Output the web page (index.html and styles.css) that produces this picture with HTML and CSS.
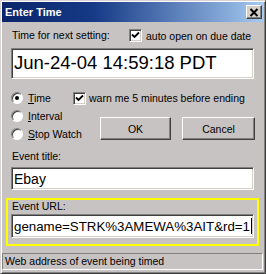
FILE: index.html
```html
<!DOCTYPE html>
<html lang="en">
<head>
    <meta charset="UTF-8">
    <title>Enter Time</title>
    <link rel="stylesheet" href="styles.css">
</head>
<body>
    <div class="window">
        <div class="titlebar">
            <span class="title">Enter Time</span>
            <span class="close">
                <svg width="10" height="9" viewBox="0 0 10 9"><path d="M1.5 1 L8.5 8 M8.5 1 L1.5 8" stroke="#000" stroke-width="2"/></svg>
            </span>
        </div>

        <div class="content">
            <div class="top-row">
                <span class="label next">Time for next setting:</span>
                <span class="check">
                    <span class="box"><svg width="9" height="9" viewBox="0 0 9 9"><path d="M1 3.5 L3.5 6 L8 1.5" fill="none" stroke="#000" stroke-width="1.8"/></svg></span>
                    auto open on due date
                </span>
            </div>

            <div class="field big">Jun-24-04 14:59:18 PDT</div>

            <div class="mode-row">
                <div class="radios">
                    <div class="radio"><span class="circle on"></span><span><u>T</u>ime</span></div>
                    <div class="radio"><span class="circle"></span><span><u>I</u>nterval</span></div>
                    <div class="radio"><span class="circle"></span><span><u>S</u>top Watch</span></div>
                </div>
                <div class="right">
                    <div class="check warn">
                        <span class="box"><svg width="9" height="9" viewBox="0 0 9 9"><path d="M1 3.5 L3.5 6 L8 1.5" fill="none" stroke="#000" stroke-width="1.8"/></svg></span>
                        warn me 5 minutes before ending
                    </div>
                    <div class="buttons">
                        <div class="btn ok">OK</div>
                        <div class="btn cancel">Cancel</div>
                    </div>
                </div>
            </div>

            <div class="label event-label">Event title:</div>
            <div class="field small">Ebay</div>

            <div class="group">
                <div class="label">Event URL:</div>
                <div class="field url">gename=STRK%3AMEWA%3AIT&amp;rd=1<span class="caret"></span></div>
            </div>
        </div>

        <div class="status">Web address of event being timed</div>
    </div>
</body>
</html>
```

FILE: styles.css
```css
html, body {
    margin: 0;
    height: 100%;
}

body {
    background: #c8c3c3;
    font-family: "Liberation Sans", Arial, sans-serif;
    font-size: 10.5px;
    color: #000;
    overflow: hidden;
}

/* 窗口外框 */
.window {
    box-sizing: border-box;
    width: 266px;
    height: 274px;
    border: 1px solid;
    border-color: #d8d4d4 #404040 #404040 #d8d4d4;
    box-shadow: inset 1px 1px #fff, inset -1px -1px #808080;
    padding: 1px;
    display: flex;
    flex-direction: column;
}

.titlebar {
    height: 20px;
    flex: none;
    display: flex;
    align-items: center;
    justify-content: space-between;
    padding: 0 2px 0 3px;
    background: linear-gradient(90deg, #0a246a 0%, #163a86 35%, #a6caf0 100%);
}

.title {
    color: #fff;
    font-weight: bold;
    font-size: 11px;
}

.close {
    box-sizing: border-box;
    width: 16px;
    height: 14px;
    display: flex;
    align-items: center;
    justify-content: center;
    background: #d4d0c8;
    border: 1px solid;
    border-color: #fff #404040 #404040 #fff;
    box-shadow: inset -1px -1px #808080;
}

.content {
    padding: 0 10px 0 9px;
    display: flex;
    flex-direction: column;
}

.label {
    height: 13px;
    line-height: 13px;
    white-space: nowrap;
}

.top-row {
    display: flex;
    align-items: center;
    height: 13px;
    margin-top: 7px;
}

.top-row .next {
    width: 117px;
    padding-left: 1px;
}

.check {
    display: flex;
    align-items: center;
    gap: 4px;
    white-space: nowrap;
}

.box {
    box-sizing: border-box;
    width: 13px;
    height: 13px;
    flex: none;
    background: #fff;
    border: 1px solid;
    border-color: #808080 #fff #fff #808080;
    box-shadow: inset 1px 1px #404040, inset -1px -1px #d4d0c8;
    display: flex;
    align-items: center;
    justify-content: center;
}

/* 输入框 */
.field {
    box-sizing: border-box;
    background: #fff;
    border: 1px solid;
    border-color: #808080 #fff #fff #808080;
    box-shadow: inset 1px 1px #404040, inset -1px -1px #d4d0c8;
    display: flex;
    align-items: center;
    padding-left: 2px;
    white-space: nowrap;
    overflow: hidden;
}

.big {
    margin-top: 6px;
    height: 31px;
    font-size: 18.5px;
    padding-bottom: 2px;
}

.mode-row {
    display: flex;
    margin-top: 10px;
}

.radios {
    width: 62px;
    flex: none;
    display: flex;
    flex-direction: column;
}

.radio {
    height: 18px;
    display: flex;
    align-items: center;
    gap: 5px;
    white-space: nowrap;
}

.circle {
    box-sizing: border-box;
    width: 12px;
    height: 12px;
    flex: none;
    border-radius: 50%;
    background: #fff;
    border: 1px solid;
    border-color: #808080 #fff #fff #808080;
    box-shadow: inset 1px 1px #404040;
    display: flex;
    align-items: center;
    justify-content: center;
}

.circle.on::after {
    content: '';
    width: 4px;
    height: 4px;
    border-radius: 50%;
    background: #000;
}

.right {
    display: flex;
    flex-direction: column;
}

.warn {
    height: 18px;
    gap: 3px;
}

.buttons {
    display: flex;
    gap: 11px;
    margin-top: 10px;
    padding-left: 27px;
}

.btn {
    box-sizing: border-box;
    height: 23px;
    display: flex;
    align-items: center;
    justify-content: center;
    border: 1px solid;
    border-color: #fff #404040 #404040 #fff;
    box-shadow: inset -1px -1px #808080;
}

.ok {
    width: 71px;
}

.cancel {
    width: 73px;
}

.event-label {
    margin-top: 7px;
    padding-left: 1px;
}

.small {
    margin-top: 4px;
    height: 23px;
    font-size: 14px;
}

.group {
    margin: 8px -5px 0 -5px;
    border: 2px solid #ffff00;
    padding: 0 3px 6px 3px;
    display: flex;
    flex-direction: column;
}

.group .label {
    padding-left: 1px;
}

.url {
    margin-top: 1px;
    height: 24px;
    font-size: 13.3px;
}

.caret {
    width: 1px;
    height: 16px;
    background: #000;
    margin-left: 1px;
}

.status {
    box-sizing: border-box;
    margin: 7px 1px 0 0;
    height: 17px;
    line-height: 15px;
    padding-left: 2px;
    border: 1px solid;
    border-color: #808080 #fff #fff #808080;
    white-space: nowrap;
    overflow: hidden;
}
```
